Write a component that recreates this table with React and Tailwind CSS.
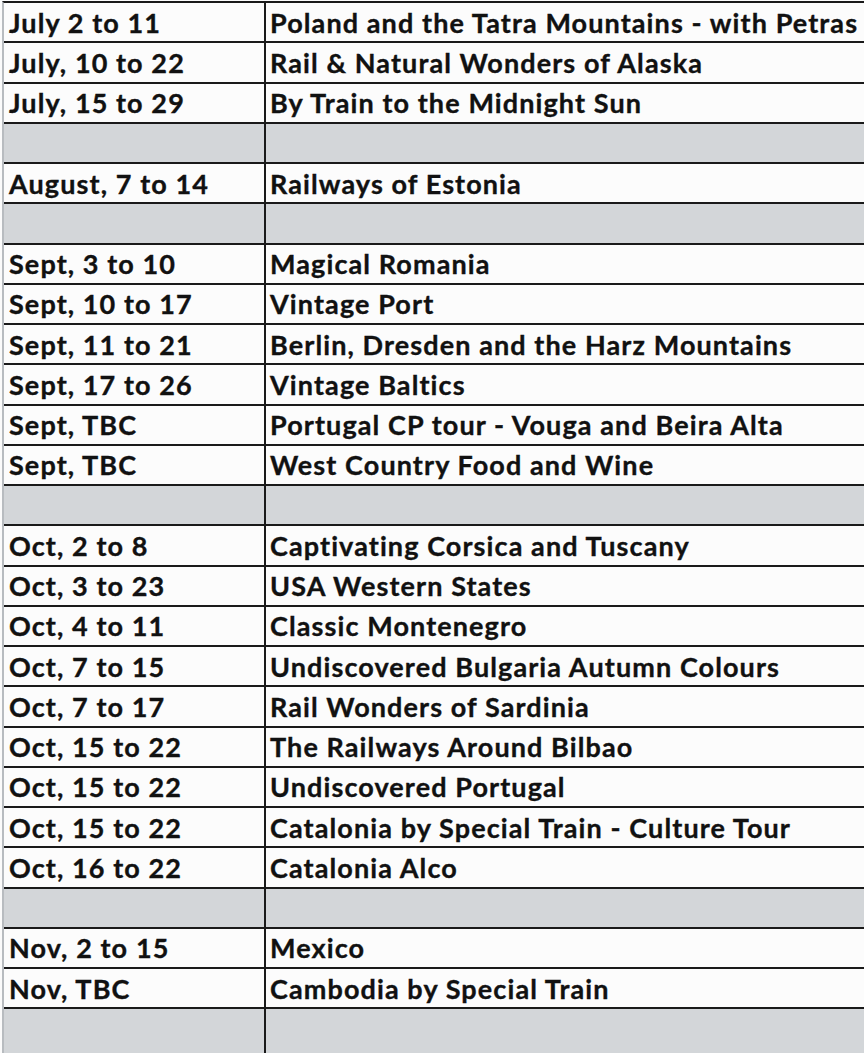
import React from "react";

const rows = [
  ["July 2 to 11", "Poland and the Tatra Mountains - with Petras"],
  ["July, 10 to 22", "Rail & Natural Wonders of Alaska"],
  ["July, 15 to 29", "By Train to the Midnight Sun"],
  null,
  ["August, 7 to 14", "Railways of Estonia"],
  null,
  ["Sept, 3 to 10", "Magical Romania"],
  ["Sept, 10 to 17", "Vintage Port"],
  ["Sept, 11 to 21", "Berlin, Dresden and the Harz Mountains"],
  ["Sept, 17 to 26", "Vintage Baltics"],
  ["Sept, TBC", "Portugal CP tour - Vouga and Beira Alta"],
  ["Sept, TBC", "West Country Food and Wine"],
  null,
  ["Oct, 2 to 8", "Captivating Corsica and Tuscany"],
  ["Oct, 3 to 23", "USA Western States"],
  ["Oct, 4 to 11", "Classic Montenegro"],
  ["Oct, 7 to 15", "Undiscovered Bulgaria Autumn Colours"],
  ["Oct, 7 to 17", "Rail Wonders of Sardinia"],
  ["Oct, 15 to 22", "The Railways Around Bilbao"],
  ["Oct, 15 to 22", "Undiscovered Portugal"],
  ["Oct, 15 to 22", "Catalonia by Special Train - Culture Tour"],
  ["Oct, 16 to 22", "Catalonia Alco"],
  null,
  ["Nov, 2 to 15", "Mexico"],
  ["Nov, TBC", "Cambodia by Special Train"],
];

const txt =
  "font-['Lato',sans-serif] font-bold text-[27px] tracking-[1.1px] text-[#111] leading-none [-webkit-text-stroke:0.35px_#111]";

export default function App() {
  return (
    <div className="w-[864px] h-[1053px] overflow-hidden bg-[#fbfbfb] pt-[1px] pl-[2px] flex flex-col">
      <div className="flex-1 flex flex-col border-t-2 border-[#1a1a1a] border-l-2 border-l-[#b8bcc0]">
        {rows.map((r, i) => (
          <div
            key={i}
            className={
              "flex h-[40.25px] shrink-0 border-b-2 border-[#1a1a1a] " +
              (r ? "bg-[#fcfcfc]" : "bg-[#d3d6d9]")
            }
          >
            <div className="w-[262px] shrink-0 border-r-2 border-[#1a1a1a] flex items-center pl-[5px] overflow-hidden whitespace-nowrap">
              {r && <span className={txt}>{r[0]}</span>}
            </div>
            <div className="flex-1 flex items-center pl-[4px] overflow-hidden whitespace-nowrap">
              {r && <span className={txt}>{r[1]}</span>}
            </div>
          </div>
        ))}
        <div className="flex flex-1 bg-[#d3d6d9]">
          <div className="w-[262px] shrink-0 border-r-2 border-[#1a1a1a]" />
          <div className="flex-1" />
        </div>
      </div>
    </div>
  );
}
